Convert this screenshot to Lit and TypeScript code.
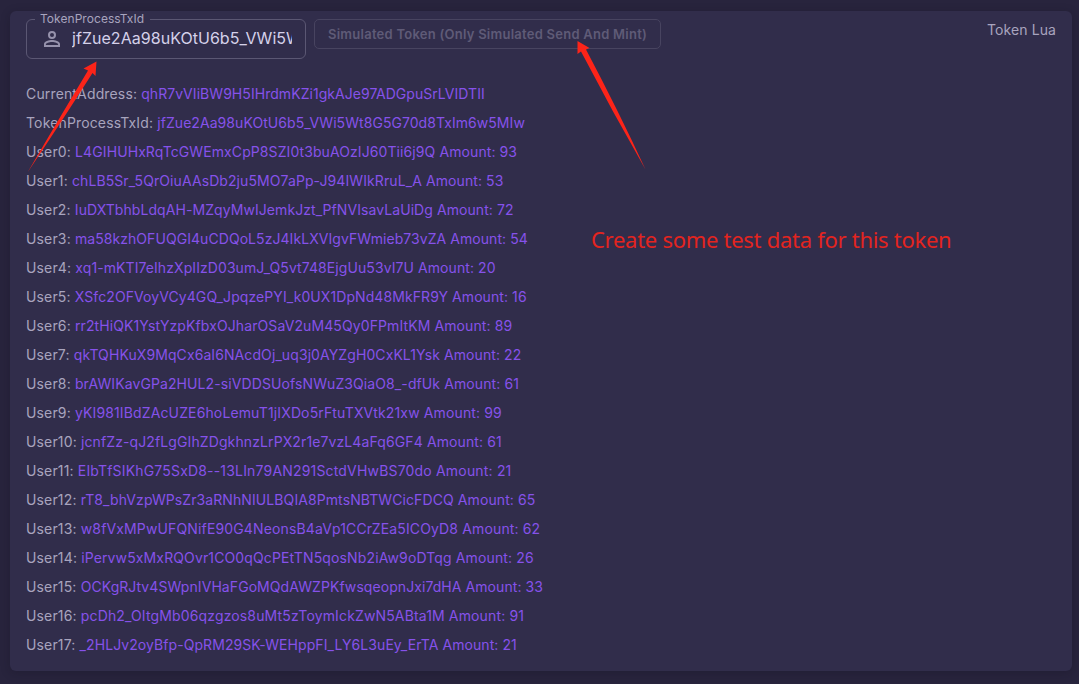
import { LitElement, html, css } from "lit";
import { customElement } from "lit/decorators.js";
import { styleMap } from "lit/directives/style-map.js";

interface Entry {
  label: string;
  value: string;
  amount?: number;
  // Letter spacing of the value, in px
  tracking: number;
}

const entries: Entry[] = [
  { label: "CurrentAddress", value: "qhR7vVIiBW9H5IHrdmKZi1gkAJe97ADGpuSrLVIDTII", tracking: 0.05 },
  { label: "TokenProcessTxId", value: "jfZue2Aa98uKOtU6b5_VWi5Wt8G5G70d8TxIm6w5MIw", tracking: 0.06 },
  { label: "User0", value: "L4GIHUHxRqTcGWEmxCpP8SZI0t3buAOzIJ60Tii6j9Q", amount: 93, tracking: 0.09 },
  { label: "User1", value: "chLB5Sr_5QrOiuAAsDb2ju5MO7aPp-J94IWIkRruL_A", amount: 53, tracking: 0.09 },
  { label: "User2", value: "IuDXTbhbLdqAH-MZqyMwIJemkJzt_PfNVIsavLaUiDg", amount: 72, tracking: 0.07 },
  { label: "User3", value: "ma58kzhOFUQGI4uCDQoL5zJ4IkLXVIgvFWmieb73vZA", amount: 54, tracking: 0.06 },
  { label: "User4", value: "xq1-mKTI7eIhzXpIIzD03umJ_Q5vt748EjgUu53vI7U", amount: 20, tracking: 0.08 },
  { label: "User5", value: "XSfc2OFVoyVCy4GQ_JpqzePYI_k0UX1DpNd48MkFR9Y", amount: 16, tracking: 0.08 },
  { label: "User6", value: "rr2tHiQK1YstYzpKfbxOJharOSaV2uM45Qy0FPmItKM", amount: 89, tracking: 0.1 },
  { label: "User7", value: "qkTQHKuX9MqCx6aI6NAcdOj_uq3j0AYZgH0CxKL1Ysk", amount: 22, tracking: 0.09 },
  { label: "User8", value: "brAWIKavGPa2HUL2-siVDDSUofsNWuZ3QiaO8_-dfUk", amount: 61, tracking: 0.1 },
  { label: "User9", value: "yKI981IBdZAcUZE6hoLemuT1jIXDo5rFtuTXVtk21xw", amount: 99, tracking: 0.13 },
  { label: "User10", value: "jcnfZz-qJ2fLgGIhZDgkhnzLrPX2r1e7vzL4aFq6GF4", amount: 61, tracking: 0.11 },
  { label: "User11", value: "EIbTfSIKhG75SxD8--13LIn79AN291SctdVHwBS70do", amount: 21, tracking: 0.18 },
  { label: "User12", value: "rT8_bhVzpWPsZr3aRNhNIULBQIA8PmtsNBTWCicFDCQ", amount: 65, tracking: 0.09 },
  { label: "User13", value: "w8fVxMPwUFQNifE90G4NeonsB4aVp1CCrZEa5ICOyD8", amount: 62, tracking: 0.14 },
  { label: "User14", value: "iPervw5xMxRQOvr1CO0qQcPEtTN5qosNb2iAw9oDTqg", amount: 26, tracking: 0.13 },
  { label: "User15", value: "OCKgRJtv4SWpnIVHaFGoMQdAWZPKfwsqeopnJxi7dHA", amount: 33, tracking: 0.07 },
  { label: "User16", value: "pcDh2_OItgMb06qzgzos8uMt5zToymIckZwN5ABta1M", amount: 91, tracking: 0.14 },
  { label: "User17", value: "_2HLJv2oyBfp-QpRM29SK-WEHppFI_LY6L3uEy_ErTA", amount: 21, tracking: 0.08 },
];

@customElement("app-root")
export class AppRoot extends LitElement {
  static styles = css`
    :host {
      display: block;
      position: relative;
      box-sizing: border-box;
      height: 684px;
      padding: 11px 7px 13px 10px;
      overflow: hidden;
      background: #28243d;
      color: #a8a4be;
      font-family: Inter, "Liberation Sans", sans-serif;
      font-size: 14px;
      line-height: 21px;
      letter-spacing: 0.15px;
    }
    .card {
      box-sizing: border-box;
      height: 660px;
      padding: 8px 16px;
      border-radius: 6px;
      background: #312d4b;
      box-shadow: 0 2px 10px rgba(19, 17, 32, 0.3);
    }
    .toolbar {
      display: flex;
      align-items: flex-start;
      gap: 8px;
      height: 60px;
    }
    .field {
      box-sizing: border-box;
      display: flex;
      width: 280px;
      height: 46px;
      min-width: 0;
      margin: -6px 0 0;
      padding: 0 13px;
      border: 1px solid #5b5773;
      border-radius: 6px;
      flex-direction: column;
    }
    .legend {
      margin-left: -5px;
      padding: 0 6px 0 5px;
      height: 13px;
      font-size: 12px;
      line-height: 12px;
      letter-spacing: 0.05px;
    }
    .control {
      display: flex;
      align-items: center;
      gap: 8px;
      height: 24px;
      margin-top: 1px;
    }
    .icon {
      flex: none;
      width: 24px;
      height: 24px;
      fill: #9692ac;
    }
    .input {
      flex: 1;
      min-width: 0;
      overflow: hidden;
      white-space: nowrap;
      font-size: 16px;
      line-height: 22px;
      padding-bottom: 2px;
      letter-spacing: 0.04px;
      color: #d5d1ea;
    }
    .button {
      box-sizing: border-box;
      height: 30px;
      padding: 0 13px;
      border: 1px solid #484460;
      border-radius: 5px;
      background: none;
      color: #5f5b77;
      font: 600 13px/28px Inter, sans-serif;
      letter-spacing: 0.25px;
      white-space: nowrap;
    }
    .title {
      margin-left: auto;
      letter-spacing: 0.1px;
    }
    .row {
      padding: 4px 0;
      white-space: nowrap;
    }
    .value {
      color: #8652ea;
    }
    .annotations {
      position: absolute;
      inset: 0;
      width: 1079px;
      height: 684px;
      pointer-events: none;
    }
    .note {
      position: absolute;
      left: 591px;
      top: 224px;
      color: #e3241f;
      font: 22px/30px "Noto Sans", sans-serif;
      letter-spacing: -0.28px;
      white-space: nowrap;
    }
  `;

  render() {
    return html`
      <div class="card">
        <div class="toolbar">
          <fieldset class="field">
            <legend class="legend">TokenProcessTxId</legend>
            <div class="control">
              <svg class="icon" viewBox="0 0 24 24">
                <path d="M12 4a4 4 0 0 1 4 4 4 4 0 0 1-4 4 4 4 0 0 1-4-4 4 4 0 0 1 4-4m0 2a2 2 0 0 0-2 2 2 2 0 0 0 2 2 2 2 0 0 0 2-2 2 2 0 0 0-2-2m0 7c2.67 0 8 1.33 8 4v3H4v-3c0-2.67 5.33-4 8-4m0 1.900c-2.970 0-6.100 1.460-6.100 2.100v1.100h12.200V17c0-.640-3.130-2.100-6.100-2.100Z" />
              </svg>
              <div class="input">jfZue2Aa98uKOtU6b5_VWi5Wt8G5G70d8TxIm6w5MIw</div>
            </div>
          </fieldset>
          <button class="button" disabled>Simulated Token (Only Simulated Send And Mint)</button>
          <div class="title">Token Lua</div>
        </div>
        ${entries.map(
          (e) => html`<div class="row">
            ${e.label}: <span class="value" style=${styleMap({ letterSpacing: `${e.tracking}px` })}>${e.value}${e.amount === undefined ? "" : ` Amount: ${e.amount}`}</span>
          </div>`
        )}
      </div>
      <svg class="annotations" viewBox="0 0 1079 684">
        <g fill="#fc2419">
          <path d="M96.500 61.500 83.500 68.500 88 70.500Q60 117 27.500 172.500 62 121 92.500 73L95.500 76Z" />
          <path d="M577.500 41 577.500 54 581 51.500Q612 111 645.500 169.500 619 112 586 49.500L589.500 48Z" />
        </g>
      </svg>
      <div class="note">Create some test data for this token</div>
    `;
  }
}
